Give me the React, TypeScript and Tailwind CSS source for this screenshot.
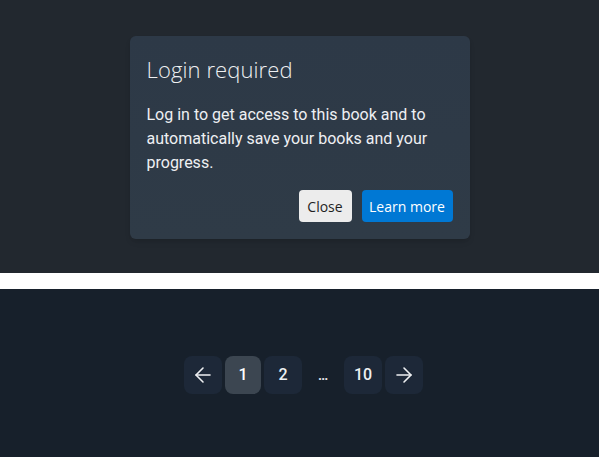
import { ArrowLeft, ArrowRight } from 'lucide-react';

const pages = ['1', '2', '…', '10'];

export default function App() {
  return (
    <div className="w-[599px] h-[457px] flex flex-col bg-white" style={{ fontFamily: 'Roboto, "Noto Sans", sans-serif' }}>
      {/* Dialog preview */}
      <section className="h-[273px] bg-[#22282f] flex justify-center pt-[36px]">
        <div className="w-[340px] h-[203px] rounded-md bg-gradient-to-b from-[#2d3947] to-[#2f3b47] shadow-md px-[17px] pt-[18px] pb-[17px] flex flex-col">
          <h2
            className="text-[22px] leading-[30px] font-light text-[#eef0f2] tracking-[0.1px]"
            style={{ fontFamily: '"Open Sans", "Noto Sans", sans-serif' }}
          >
            Login required
          </h2>
          <p className="mt-[19px] text-[16px] leading-[24px] font-normal text-[#eef0f3]">
            Log in to get access to this book and to automatically save your books and your progress.
          </p>
          <div className="mt-auto flex justify-end gap-[10px]">
            <button
              className="h-[32px] w-[53px] rounded-[4px] bg-[#ececec] text-[14px] text-[#1f1f1f]"
              style={{ fontFamily: '"Open Sans", sans-serif' }}
            >
              Close
            </button>
            <button
              className="h-[32px] w-[91px] rounded-[4px] bg-[#0078d4] text-[14px] text-white"
              style={{ fontFamily: '"Open Sans", sans-serif' }}
            >
              Learn more
            </button>
          </div>
        </div>
      </section>

      <div className="h-[16px] bg-white" />

      {/* Pagination */}
      <section className="flex-1 bg-[#17202b] flex items-center justify-center pl-[8px] pt-[4px]">
        <nav className="flex items-center gap-[3px]">
          <button className="w-[38px] h-[38px] rounded-lg bg-[#1d2838] flex items-center justify-center text-[#eef0f2]">
            <ArrowLeft size={24} strokeWidth={1.6} />
          </button>
          {pages.map((p, i) =>
            p === '…' ? (
              <span key={i} className="w-[34px] h-[38px] mx-[1px] flex items-center justify-center text-[14px] font-semibold text-[#e5e7eb]">
                …
              </span>
            ) : (
              <button
                key={i}
                className={
                  i === 0
                    ? 'w-[36px] h-[38px] rounded-lg bg-[#3c4651] text-[16px] font-medium text-white'
                    : 'w-[38px] h-[38px] rounded-lg bg-[#1d2838] text-[16px] font-medium text-[#eef0f2]'
                }
              >
                {p}
              </button>
            )
          )}
          <button className="w-[38px] h-[38px] rounded-lg bg-[#1d2838] flex items-center justify-center text-[#eef0f2]">
            <ArrowRight size={24} strokeWidth={1.6} />
          </button>
        </nav>
      </section>
    </div>
  );
}
